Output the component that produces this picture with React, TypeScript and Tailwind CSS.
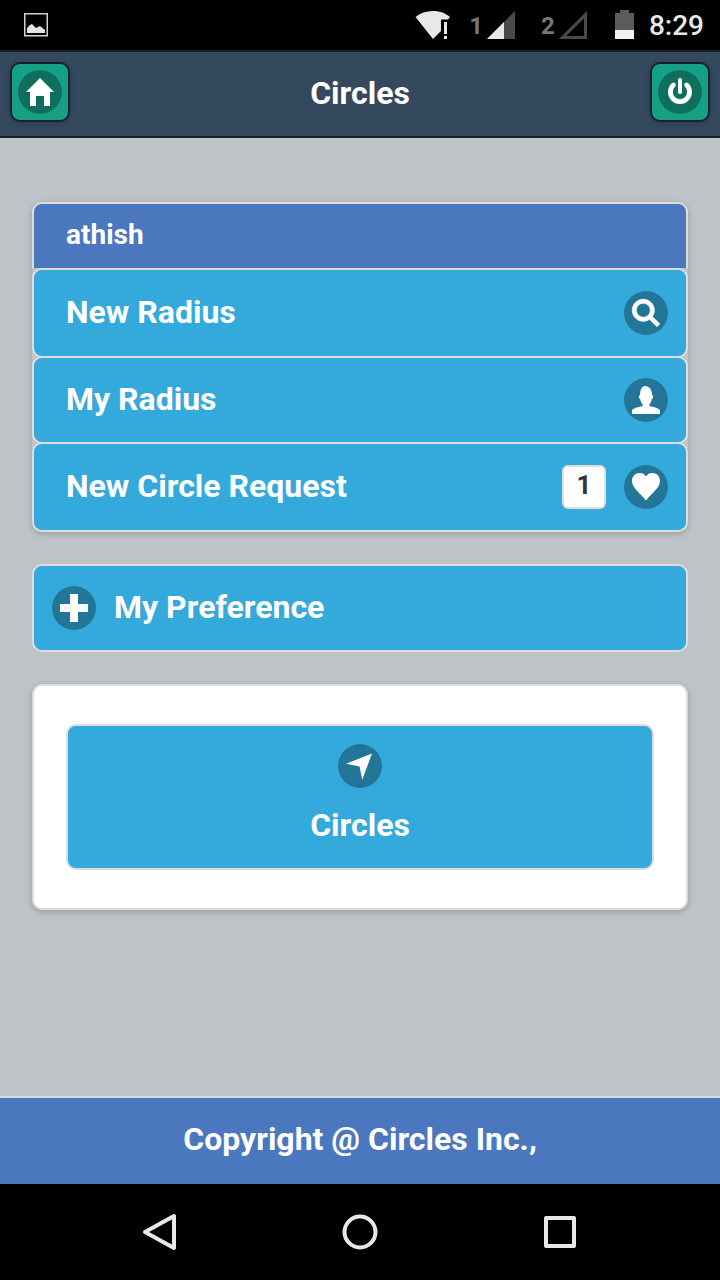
import React from 'react';

type IconName = 'home' | 'power' | 'search' | 'user' | 'heart' | 'plus' | 'location';

const icons: Record<IconName, React.ReactNode> = {
  home: <polygon points="7,0 0,7 2,7 2,14 5,14 5,9 9,9 9,14 12,14 12,7 14,7" />,
  plus: <polygon points="14,5 9,5 9,0 5,0 5,5 0,5 0,9 5,9 5,14 9,14 9,9 14,9" />,
  location: <polygon points="13,0.7 0,5.9 6.8,7.2 8.1,14" />,
  power: (
    <g fill="none" stroke="currentColor" strokeLinecap="round">
      <path strokeWidth="2" d="M7 1v6" />
      <path strokeWidth="2.4" d="M3.7 3.5a4.8 4.8 0 1 0 6.6 0" />
    </g>
  ),
  search: (
    <path
      stroke="currentColor"
      strokeWidth="0.4"
      d="M10.171,8.766c0.617-0.888,0.979-1.964,0.979-3.126c0-3.037-2.463-5.5-5.5-5.5s-5.5,2.463-5.5,5.5s2.463,5.5,5.5,5.5c1.152,0,2.223-0.355,3.104-0.962l3.684,3.683l1.414-1.414L10.171,8.766z M5.649,9.14c-1.933,0-3.5-1.567-3.5-3.5c0-1.933,1.567-3.5,3.5-3.5c1.933,0,3.5,1.567,3.5,3.5C9.149,7.572,7.582,9.14,5.649,9.14z"
    />
  ),
  user: (
    <path d="M8.851,10.101c-0.18-0.399-0.2-0.763-0.153-1.104C9.383,8.49,9.738,7.621,9.891,6.465C10.493,6.355,10.5,5.967,10.5,5.5c0-0.437-0.008-0.804-0.502-0.94C9.999,4.539,10,4.521,10,4.5c0-2.103-1-4-2-4C8,0.5,7.5,0,6.5,0C5,0,4,1.877,4,4.5c0,0.021,0.001,0.039,0.002,0.06C3.508,4.696,3.5,5.063,3.5,5.5c0,0.467,0.007,0.855,0.609,0.965C4.262,7.621,4.617,8.49,5.303,8.997c0.047,0.341,0.026,0.704-0.153,1.104C1.503,10.503,0,12,0,12v2h14v-2C14,12,12.497,10.503,8.851,10.101z" />
  ),
  heart: (
    <path d="M7 1.7C6.3.6 5.2 0 3.8 0 1.6 0 0 1.7 0 3.9 0 7.6 4.1 10 7 13.8 9.9 10 14 7.6 14 3.9 14 1.7 12.4 0 10.2 0 8.8 0 7.7.6 7 1.7z" />
  )
};

function DiscIcon({ name }: { name: IconName }) {
  return (
    <span className="flex h-11 w-11 shrink-0 items-center justify-center rounded-full bg-black/30">
      <svg className="h-7 w-7 overflow-visible text-white" viewBox="0 0 14 14" fill="currentColor" aria-hidden="true">
        {icons[name]}
      </svg>
    </span>
  );
}

function StatusBar() {
  return (
    <div className="flex h-[50px] items-center justify-between bg-black pr-4 pl-6">
      <svg className="h-6 w-6" viewBox="0 0 24 24" aria-hidden="true">
        <rect x="0.75" y="0.75" width="22.5" height="22" fill="none" stroke="#d0d2d0" strokeWidth="1.5" />
        <path fill="#e4e4e4" d="M3 20v-5l3-3 2-1 4 4 4-2 5 4v3z" />
      </svg>
      <div className="flex items-center">
        <svg className="mr-[18px] h-7 w-9" viewBox="0 0 36 28" aria-hidden="true">
          <path fill="#e8e8e8" d="M.5 6C5 2 11 0 18 0s12 2 17 6l-2 2.500h-7V20l-8 8z" />
          <path fill="#e8e8e8" d="M29 11h3v12h-3zM29 25h3v3h-3z" />
        </svg>
        <span className="mr-1 pt-[2px] text-2xl font-bold text-[#767676]">1</span>
        <svg className="mr-[26px] h-7 w-7" viewBox="0 0 28 28" aria-hidden="true">
          <path fill="#4a4a4a" d="M28 0v28H0z" />
          <path fill="#e8e8e8" d="M17 11v17H0z" />
        </svg>
        <span className="mr-1 pt-[2px] text-2xl font-bold text-[#767676]">2</span>
        <svg className="mr-7 h-7 w-7" viewBox="0 0 28 28" aria-hidden="true">
          <path fill="none" stroke="#4a4a4a" strokeWidth="3" d="M26.500 3.600v22.900H3.600z" />
        </svg>
        <svg className="mr-[14px] h-[30px] w-5" viewBox="0 0 20 30" aria-hidden="true">
          <path fill="#5c5c5c" d="M0 3h5V0h9v3h5v17H0z" />
          <path fill="#f2f2f2" d="M0 20h19v9H0z" />
        </svg>
        <span className="pt-[2px] text-[28px] font-medium text-[#e8e8e8]">8:29</span>
      </div>
    </div>
  );
}

function HeaderButton({ icon, label }: { icon: IconName; label: string }) {
  return (
    <button
      type="button"
      aria-label={label}
      className="flex h-[60px] w-[60px] items-center justify-center rounded-[10px] border-2 border-[#18202a] bg-[#16a085] shadow-[0_2px_6px_rgba(0,0,0,0.15)]"
    >
      <DiscIcon name={icon} />
    </button>
  );
}

interface MenuItem {
  label: string;
  icon: IconName;
  count?: number;
}

const menu: MenuItem[] = [
  { label: 'New Radius', icon: 'search' },
  { label: 'My Radius', icon: 'user' },
  { label: 'New Circle Request', icon: 'heart', count: 1 }
];

export default function App() {
  return (
    <div className="flex min-h-screen flex-col bg-[#bdc3c7] font-['Roboto',sans-serif]">
      <StatusBar />

      <header className="flex h-[88px] items-center justify-between border-y-2 border-[#1a2028] bg-[#34495e] px-[10px] pb-1">
        <HeaderButton icon="home" label="Home" />
        <h1 className="pt-[2px] text-[32px] font-bold text-white">Circles</h1>
        <HeaderButton icon="power" label="Log out" />
      </header>

      <main className="flex flex-1 flex-col gap-8 px-8 pt-16 pb-8">
        <section className="rounded-[10px] bg-[#c4c4c8] shadow-[0_2px_6px_rgba(0,0,0,0.2)]">
          <h2 className="flex h-[66px] items-center rounded-t-[10px] border-2 border-b-0 border-[#dddddd] bg-[#4b77be] px-8 pb-[2px] text-[28px] font-bold text-white">
            athish
          </h2>
          <ul>
            {menu.map((item) => (
              <li key={item.label} className="h-[90px] not-first:-mt-[2px] even:h-[88px]">
                <a
                  href="#"
                  className="flex h-full items-center gap-[18px] rounded-[10px] border-2 border-[#dddddd] bg-[#34aadc] pr-[18px] pl-8 text-white"
                >
                  <span className="flex-1 pb-[2px] text-[32px] font-bold">{item.label}</span>
                  {item.count && (
                    <span className="flex h-11 w-11 items-center justify-center rounded-md border-2 border-[#dddddd] bg-white pb-1 text-[26px] font-bold text-[#333333]">
                      {item.count}
                    </span>
                  )}
                  <DiscIcon name={item.icon} />
                </a>
              </li>
            ))}
          </ul>
        </section>

        <button
          type="button"
          className="flex h-[88px] items-center gap-[18px] rounded-[10px] border-2 border-[#dddddd] bg-[#34aadc] px-[18px] text-[32px] font-bold text-white"
        >
          <DiscIcon name="plus" />
          <span className="pb-[2px]">My Preference</span>
        </button>

        <section className="rounded-[10px] border-2 border-[#dddddd] bg-white px-8 py-[38px] shadow-[0_2px_6px_rgba(0,0,0,0.2)]">
          <button
            type="button"
            className="flex w-full flex-col items-center gap-[13px] rounded-[10px] border-2 border-[#dddddd] bg-[#34aadc] pt-[18px] pb-[19px] text-[32px] font-bold text-white"
          >
            <DiscIcon name="location" />
            Circles
          </button>
        </section>
      </main>

      <footer className="flex h-[88px] items-center justify-center border-t-2 border-[#dddddd] bg-[#4b77be] pb-1 text-[32px] font-bold text-white">
        Copyright @ Circles Inc.,
      </footer>

      <nav className="flex h-24 items-center justify-between bg-black px-[140px] text-[#e8e8e8]">
        <button type="button" aria-label="Back">
          <svg className="h-10 w-10" viewBox="0 0 40 40" fill="none" stroke="currentColor" strokeWidth="4" strokeLinejoin="round">
            <path d="M34 4v32L5 20z" />
          </svg>
        </button>
        <button type="button" aria-label="Home screen">
          <svg className="h-10 w-10" viewBox="0 0 40 40" fill="none" stroke="currentColor" strokeWidth="4">
            <circle cx="20" cy="20" r="15.500" />
          </svg>
        </button>
        <button type="button" aria-label="Recent apps">
          <svg className="h-10 w-10" viewBox="0 0 40 40" fill="none" stroke="currentColor" strokeWidth="4" strokeLinejoin="round">
            <rect x="6" y="6" width="28" height="28" />
          </svg>
        </button>
      </nav>
    </div>
  );
}
